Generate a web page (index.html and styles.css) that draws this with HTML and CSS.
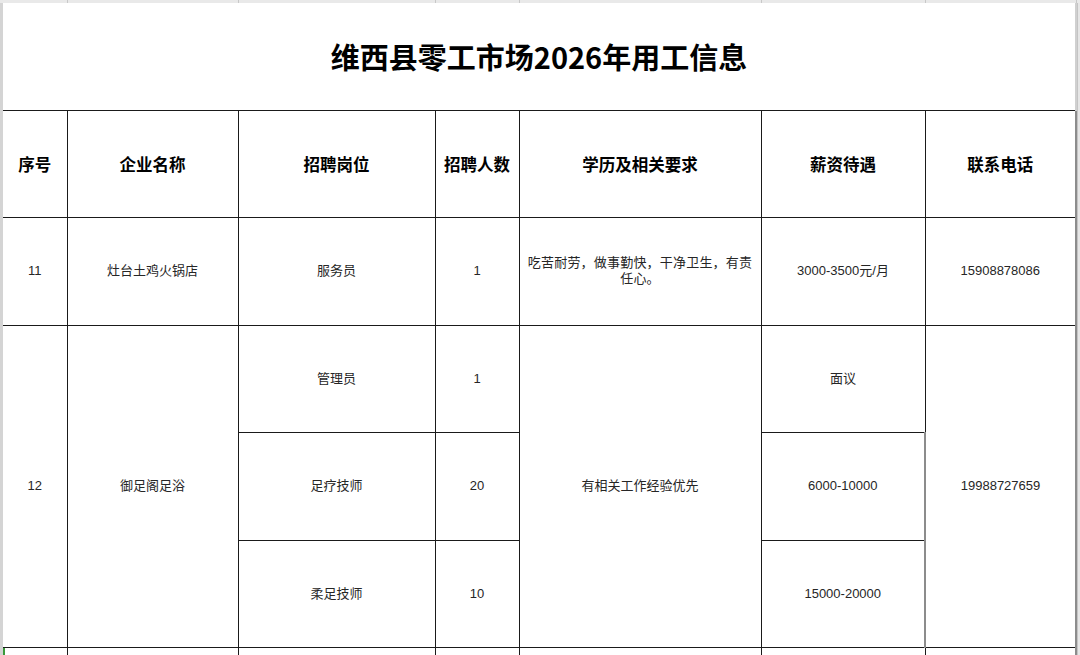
FILE: index.html
```html
<!DOCTYPE html>
<html lang="zh-CN">
<head>
<meta charset="utf-8">
<title>维西县零工市场2026年用工信息</title>
<link rel="stylesheet" href="styles.css">
</head>
<body>
<div class="sheet">
  <div class="grid-top">
    <span class="gt c1"></span><span class="gt c2"></span><span class="gt c3"></span><span class="gt c4"></span><span class="gt c5"></span><span class="gt c6"></span><span class="gt c7"></span>
  </div>
  <div class="sheet-body">
    <table class="jobs">
      <colgroup>
        <col class="w1"><col class="w2"><col class="w3"><col class="w4"><col class="w5"><col class="w6"><col class="w7">
      </colgroup>
      <tr class="title-row">
        <td colspan="7" class="title">维西县零工市场2026年用工信息</td>
      </tr>
      <tr class="head-row">
        <th>序号</th>
        <th>企业名称</th>
        <th>招聘岗位</th>
        <th>招聘人数</th>
        <th>学历及相关要求</th>
        <th>薪资待遇</th>
        <th>联系电话</th>
      </tr>
      <tr class="row">
        <td>11</td>
        <td>灶台土鸡火锅店</td>
        <td>服务员</td>
        <td>1</td>
        <td class="req">吃苦耐劳，做事勤快，干净卫生，有责任心。</td>
        <td>3000-3500元/月</td>
        <td>15908878086</td>
      </tr>
      <tr class="row">
        <td rowspan="3">12</td>
        <td rowspan="3">御足阁足浴</td>
        <td>管理员</td>
        <td>1</td>
        <td rowspan="3">有相关工作经验优先</td>
        <td>面议</td>
        <td rowspan="3">19988727659</td>
      </tr>
      <tr class="row">
        <td>足疗技师</td>
        <td>20</td>
        <td>6000-10000</td>
      </tr>
      <tr class="row">
        <td>柔足技师</td>
        <td>10</td>
        <td>15000-20000</td>
      </tr>
      <tr class="row next">
        <td class="sel"></td><td></td><td></td><td></td><td></td><td></td><td></td>
      </tr>
    </table>
    <div class="edge-right"></div>
  </div>
</div>
</body>
</html>
```

FILE: styles.css
```css
html, body {
  margin: 0;
  padding: 0;
  background: #ffffff;
  overflow: hidden;
}

body {
  width: 1080px;
  height: 655px;
  font-family: "Liberation Sans", "Noto Sans CJK SC", sans-serif;
  color: #222;
}

.sheet {
  width: 1080px;
  height: 655px;
  overflow: hidden;
}

.grid-top {
  display: flex;
  height: 3px;
  background: #e9e9e9;
  padding-left: 3px;
  box-sizing: border-box;
}

.gt {
  display: block;
  height: 3px;
  border-right: 1px solid #c8c8c8;
  box-sizing: border-box;
}
.gt.c1 { width: 65px; }
.gt.c2 { width: 171px; }
.gt.c3 { width: 197px; }
.gt.c4 { width: 84px; }
.gt.c5 { width: 242px; }
.gt.c6 { width: 164px; }
.gt.c7 { width: 151px; }

.sheet-body {
  display: flex;
  align-items: flex-start;
  border-left: 3px solid #d4d4d4;
  height: 652px;
}

.jobs {
  border-collapse: collapse;
  table-layout: fixed;
  width: 1073px;
  flex: none;
}

.w1 { width: 64px; }
.w2 { width: 171px; }
.w3 { width: 197px; }
.w4 { width: 84px; }
.w5 { width: 242px; }
.w6 { width: 164px; }
.w7 { width: 151px; }

.jobs td, .jobs th {
  border: 1px solid #1a1a1a;
  text-align: center;
  vertical-align: middle;
  padding: 0 5px;
  font-size: 13px;
  line-height: 16px;
  font-weight: normal;
  color: #262626;
}

.jobs tr > :last-child {
  border-right: 2px solid #8c8c8c;
}

.title-row td.title {
  height: 105px;
  border-top: none;
  border-left: none;
  border-right: 2px solid #d0d0d0;
  font-family: "Noto Sans CJK SC", sans-serif;
  font-weight: 700;
  font-size: 29px;
  line-height: 36px;
  color: #000;
  padding-bottom: 2px;
}

.head-row th {
  height: 105px;
  font-family: "Noto Sans CJK SC", sans-serif;
  font-weight: 700;
  font-size: 16.5px;
  color: #000;
  padding-bottom: 1px;
}

.jobs tr.head-row > :first-child,
.jobs tr.row > :first-child {
  border-left: none;
}

.row td {
  height: 106.6px;
}

.req {
  letter-spacing: 0.2px;
}

.row.next td {
  height: 30px;
}

.row.next td.sel {
  box-shadow: inset 2px 0 0 #3a9a3a;
}

.edge-right {
  flex: none;
  align-self: stretch;
  width: 4px;
  background: #e6e6e6;
  border-left: 1px solid #c4c4c4;
}
```
